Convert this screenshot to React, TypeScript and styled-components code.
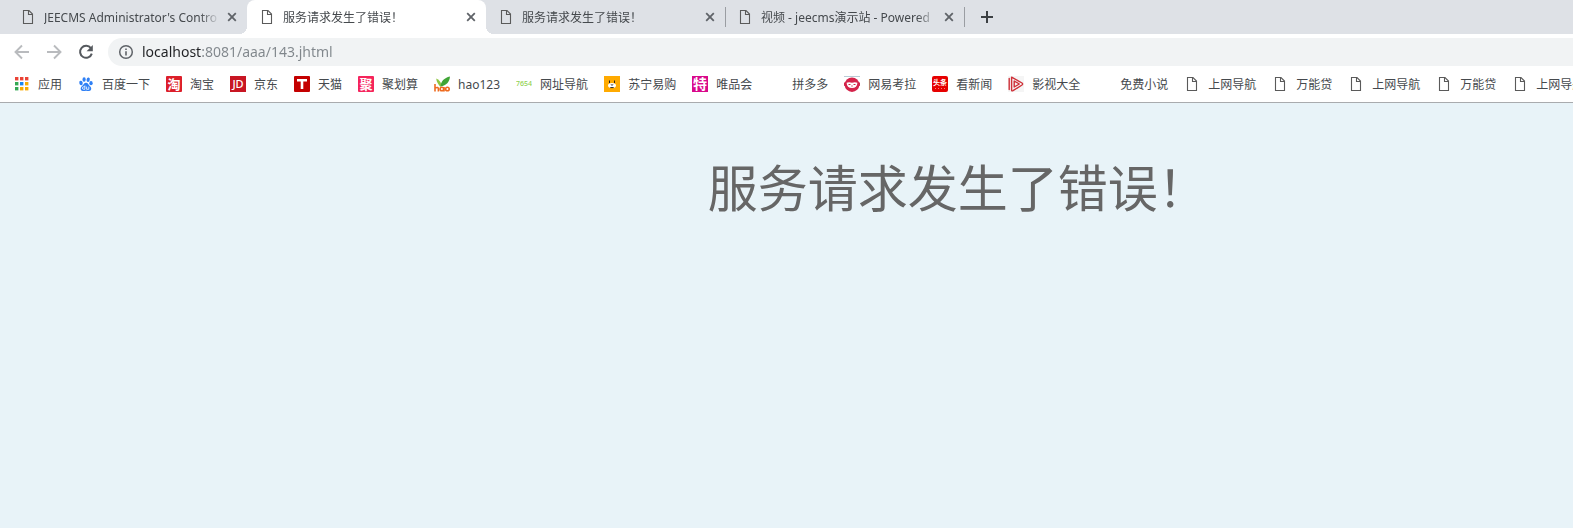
import React from "react";
import styled, { createGlobalStyle } from "styled-components";

const GlobalStyle = createGlobalStyle`
  *, *::before, *::after { box-sizing: border-box; }
  html, body, #root { height: 100%; margin: 0; }
  body {
    font-family: "Noto Sans", "Noto Sans CJK SC", sans-serif;
    font-size: 12px;
    color: #45494d;
    overflow: hidden;
  }
  button { border: 0; padding: 0; background: none; font: inherit; color: inherit; }
  svg { display: block; flex: none; }
`;

const Browser = styled.div`
  display: flex;
  flex-direction: column;
  min-height: 100%;
  background: #fff;
`;

const TabStrip = styled.div`
  display: flex;
  height: 34px;
  padding-left: 8px;
  background: #dee1e6;
`;

const Tab = styled.div<{ $active?: boolean; $divider?: boolean }>`
  position: relative;
  flex: 0 1 239px;
  min-width: 0;
  display: flex;
  align-items: center;
  padding: 0 7px 0 12px;
  border-radius: 8px 8px 0 0;
  background: ${(p) => (p.$active ? "#fff" : "transparent")};

  &::before,
  &::after {
    content: ${(p) => (p.$active ? '""' : "none")};
    position: absolute;
    bottom: 0;
    width: 8px;
    height: 8px;
  }
  &::before {
    right: 100%;
    background: radial-gradient(circle at 0 0, transparent 8px, #fff 8px);
  }
  &::after {
    left: 100%;
    background: radial-gradient(circle at 100% 0, transparent 8px, #fff 8px);
  }
  ${(p) =>
    p.$divider &&
    `&::after {
      content: "";
      left: 100%;
      bottom: 7px;
      width: 1px;
      height: 20px;
      background: #9a9da2;
    }`}
`;

const TabTitle = styled.button`
  flex: 1;
  min-width: 0;
  display: flex;
  align-items: center;
  gap: 8px;
  height: 34px;
  text-align: left;
`;

const TabText = styled.span`
  flex: 1;
  padding-top: 2px;
  overflow: hidden;
  white-space: nowrap;
  line-height: 20px;
  mask-image: linear-gradient(to left, transparent, #000 20px);
`;

const IconButton = styled.button<{ $size: number }>`
  flex: none;
  display: flex;
  align-items: center;
  justify-content: center;
  width: ${(p) => p.$size}px;
  height: ${(p) => p.$size}px;
`;

const CloseButton = styled(IconButton)`
  margin-left: 4px;
`;

const NewTabButton = styled(IconButton)`
  margin-left: 6px;
  align-self: center;
`;

const Toolbar = styled.div`
  display: flex;
  align-items: center;
  gap: 4px;
  height: 36px;
  padding: 0 0 0 8px;
`;

const AddressBar = styled.label`
  flex: 1;
  display: flex;
  align-items: center;
  gap: 8px;
  height: 28px;
  margin-left: 4px;
  padding-left: 10px;
  border-radius: 14px 0 0 14px;
  background: #f1f3f4;
`;

const AddressInput = styled.input`
  flex: 1;
  min-width: 0;
  height: 24px;
  padding: 0;
  border: 0;
  outline: 0;
  font: 14px/24px "Noto Sans", "Noto Sans CJK SC", sans-serif;
  color: transparent;
  background: linear-gradient(to right, #202124 60px, #80868b 60px);
  background-clip: text;
`;

const BookmarkBar = styled.nav`
  display: flex;
  gap: 16px;
  height: 33px;
  padding: 0 0 4px 14px;
  overflow: hidden;
  border-bottom: 1px solid #a9abae;
`;

const Bookmark = styled.a`
  flex: none;
  display: flex;
  align-items: center;
  gap: 8px;
  color: #45494d;
  text-decoration: none;
  white-space: nowrap;
`;

const BookmarkLabel = styled.span`
  padding-top: 2px;
  line-height: 20px;
`;

const Page = styled.main`
  flex: 1;
  padding: 50px 0 50px 45%;
  background: #e8f3f8;
`;

const Heading = styled.h1`
  margin: 0;
  font-size: 50px;
  font-weight: 400;
  line-height: 70px;
  white-space: nowrap;
  color: #666;
`;

const Icon = ({ size = 16, children }: { size?: number; children?: React.ReactNode }) => (
  <svg width={size} height={size} viewBox={`0 0 ${size} ${size}`} aria-hidden="true">
    {children}
  </svg>
);

const PageIcon = () => (
  <Icon>
    <path
      d="M3.500 1.500H9L12.500 5V14.500H3.500zM8.500 1.500V5.500H12.500"
      fill="none"
      stroke="#5a5a5a"
      strokeWidth="1.100"
    />
  </Icon>
);

const CloseIcon = () => (
  <Icon>
    <path d="M4.2 4.2l7.6 7.6M11.8 4.2l-7.6 7.6" stroke="#5f6368" strokeWidth="1.800" />
  </Icon>
);

const ArrowIcon = ({ back }: { back?: boolean }) => (
  <Icon>
    <path
      d={back ? "M15 8H2M8 1.5L1.5 8L8 14.5" : "M1 8h13M8 1.5L14.5 8L8 14.5"}
      fill="none"
      stroke="#b9bbbe"
      strokeWidth="1.900"
    />
  </Icon>
);

const ReloadIcon = () => (
  <Icon>
    <path d="M12.9 4.2A6 6 0 1 0 13.8 9.6" fill="none" stroke="#55595e" strokeWidth="2" />
    <path d="M14.8 1v6.2H8.6z" fill="#55595e" />
  </Icon>
);

const InfoIcon = () => (
  <Icon>
    <circle cx="8" cy="8" r="6.300" fill="none" stroke="#5f6368" strokeWidth="1.500" />
    <path d="M8 7.2v4.2M8 4.4v1.6" stroke="#5f6368" strokeWidth="1.600" />
  </Icon>
);

const AppsIcon = () => {
  const colors = [
    "#ea4335", "#ea4335", "#ea4335",
    "#34a853", "#1a86f0", "#f9ab00",
    "#34a853", "#f9ab00", "#f9ab00",
  ];
  return (
    <Icon>
      {colors.map((c, i) => (
        <rect key={i} x={1 + (i % 3) * 5} y={1 + Math.floor(i / 3) * 5} width="3.400" height="3.400" fill={c} />
      ))}
    </Icon>
  );
};

const BaiduIcon = () => (
  <Icon>
    <g fill="#2f80f5">
      <ellipse cx="3" cy="7" rx="1.700" ry="2.200" transform="rotate(-15 3 7)" />
      <ellipse cx="6.100" cy="3.500" rx="1.600" ry="2.300" />
      <ellipse cx="10.200" cy="3.700" rx="1.600" ry="2.300" transform="rotate(12 10.2 3.7)" />
      <ellipse cx="13" cy="7.200" rx="1.700" ry="2.100" />
      <path d="M8 6.7c2 0 2.5 2.2 4.1 3.5 2 1.8 1.2 4.6-1 4.8-1.200.1-2-.3-3.100-.3s-2 .5-3.200.3c-2.300-.3-2.900-3-1-4.800C5.400 8.900 6.100 6.700 8 6.700z" />
    </g>
    <path d="M6.900 9.500v3.800H5.700a1.200 1.200 0 0 1 0-2.500h1.200M8.600 10.600v2.700h2.200v-2.700" fill="none" stroke="#fff" strokeWidth=".8" />
  </Icon>
);

const TileIcon = ({
  fill, text, size, color = "#fff", radius = 0, weight = 700, y = 13,
}: {
  fill: string; text: string; size: number; color?: string; radius?: number; weight?: number; y?: number;
}) => (
  <Icon>
    <rect width="16" height="16" rx={radius} fill={fill} />
    <text x="8" y={y} fontSize={size} fontWeight={weight} fill={color} textAnchor="middle">
      {text}
    </text>
  </Icon>
);

const TmallIcon = () => (
  <Icon>
    <rect width="16" height="16" rx="1" fill="#c40000" />
    <path d="M3 3h10v2.400H9.300V13H6.700V5.400H3z" fill="#fff" />
  </Icon>
);

const HaoIcon = () => (
  <Icon>
    <path d="M6.500 11C4.200 8.500 2.500 6 2.200 2.600 5 3.800 6.700 6 7.300 8.400z" fill="#8cc63f" />
    <path d="M6.500 10.500C6.800 5.500 10 1.800 16 .5 15.500 6 12.500 9.500 6.500 10.500z" fill="#3fa535" />
    <g fill="none" stroke="#ee6b1f" strokeWidth="1.600">
      <path d="M1 8V15.500M1 12q3.400-1.400 3.400 1V15.500" />
      <circle cx="7.900" cy="13" r="1.800" />
      <path d="M10 11v4.500" />
      <circle cx="13.400" cy="13" r="1.800" />
    </g>
  </Icon>
);

const SuningIcon = () => (
  <Icon>
    <rect width="16" height="16" fill="#ffaa00" />
    <path d="M5.500 4.500v2.500M10.500 4.500v2.500" stroke="#222" strokeWidth="1" />
    <ellipse cx="8" cy="9.500" rx="4" ry="2.500" fill="#fff" />
    <path d="M6.300 8.500h3.400L8 9.800z" fill="#222" />
    <path d="M6.300 11.600h3.400" stroke="#222" />
  </Icon>
);

const KaolaIcon = () => (
  <Icon>
    <path d="M0 .5h16" stroke="#b9ccd6" />
    <ellipse cx="8" cy="8.700" rx="7.300" ry="7.200" fill="#d4234a" />
    <path d="M0 6.500h16v3Q15 11 8 11T0 9.500z" fill="#d4234a" />
    <path d="M2.600 6.800Q5 5.600 8 6.800Q11 5.600 13.400 6.800Q13.200 12 8 12T2.600 6.800z" fill="#fff" />
    <path d="M4.500 8.500h2M9.500 8.500h2M7.300 10h1.400" stroke="#d4234a" strokeWidth="1.100" />
  </Icon>
);

const ToutiaoIcon = () => (
  <Icon>
    <rect width="16" height="16" rx="2" fill="#e60000" />
    <text x="8" y="9" fontSize="7" fontWeight="700" fill="#fff" textAnchor="middle">头条</text>
    <path d="M3 12.500h10" stroke="#ff7b7b" strokeDasharray="1 2" />
  </Icon>
);

const PlayIcon = () => (
  <Icon>
    <rect width="16" height="16" fill="#f5f5f5" />
    <path
      d="M1.200 13.500V2.500M3.600 1.200L14 7Q15.300 8 14 9L5 14.700Q3.600 15.300 3.600 14zM6.200 5v6L11.300 8z"
      fill="none"
      stroke="#cf3038"
      strokeWidth="1.400"
      strokeLinecap="round"
      strokeLinejoin="round"
    />
  </Icon>
);

const tabs = [
  { title: "JEECMS Administrator's Contro" },
  { title: "服务请求发生了错误！", active: true },
  { title: "服务请求发生了错误！", divider: true },
  { title: "视频 - jeecms演示站 - Powered", divider: true },
];

const bookmarks: { label: string; icon: React.ReactNode }[] = [
  { label: "应用", icon: <AppsIcon /> },
  { label: "百度一下", icon: <BaiduIcon /> },
  { label: "淘宝", icon: <TileIcon fill="#dc1f2a" radius={1} text="淘" size={13} /> },
  { label: "京东", icon: <TileIcon fill="#c81623" text="JD" size={11} weight={500} y={12} /> },
  { label: "天猫", icon: <TmallIcon /> },
  { label: "聚划算", icon: <TileIcon fill="#f5245b" radius={1} text="聚" size={13} /> },
  { label: "hao123", icon: <HaoIcon /> },
  { label: "网址导航", icon: <TileIcon fill="transparent" color="#8fd14f" text="7654" size={7} weight={500} y={10} /> },
  { label: "苏宁易购", icon: <SuningIcon /> },
  { label: "唯品会", icon: <TileIcon fill="#d9098b" text="特" size={14} /> },
  { label: "拼多多", icon: <Icon /> },
  { label: "网易考拉", icon: <KaolaIcon /> },
  { label: "看新闻", icon: <ToutiaoIcon /> },
  { label: "影视大全", icon: <PlayIcon /> },
  { label: "免费小说", icon: <Icon /> },
  { label: "上网导航", icon: <PageIcon /> },
  { label: "万能贷", icon: <PageIcon /> },
  { label: "上网导航", icon: <PageIcon /> },
  { label: "万能贷", icon: <PageIcon /> },
  { label: "上网导航", icon: <PageIcon /> },
];

export default function App() {
  return (
    <>
      <GlobalStyle />
      <Browser>
        <TabStrip>
          {tabs.map((t, i) => (
            <Tab key={i} $active={t.active} $divider={t.divider}>
              <TabTitle type="button">
                <PageIcon />
                <TabText>{t.title}</TabText>
              </TabTitle>
              <CloseButton type="button" $size={16} aria-label="关闭标签页">
                <CloseIcon />
              </CloseButton>
            </Tab>
          ))}
          <NewTabButton type="button" $size={34} aria-label="新标签页">
            <Icon>
              <path d="M8 2v12M2 8h12" stroke="#3c4043" strokeWidth="2" />
            </Icon>
          </NewTabButton>
        </TabStrip>
        <Toolbar>
          <IconButton type="button" $size={28} aria-label="后退"><ArrowIcon back /></IconButton>
          <IconButton type="button" $size={28} aria-label="前进"><ArrowIcon /></IconButton>
          <IconButton type="button" $size={28} aria-label="重新加载"><ReloadIcon /></IconButton>
          <AddressBar>
            <InfoIcon />
            <AddressInput type="text" aria-label="地址" defaultValue="localhost:8081/aaa/143.jhtml" />
          </AddressBar>
        </Toolbar>
        <BookmarkBar>
          {bookmarks.map((b, i) => (
            <Bookmark href="#" key={i}>
              {b.icon}
              <BookmarkLabel>{b.label}</BookmarkLabel>
            </Bookmark>
          ))}
        </BookmarkBar>
        <Page>
          <Heading>服务请求发生了错误！</Heading>
        </Page>
      </Browser>
    </>
  );
}
